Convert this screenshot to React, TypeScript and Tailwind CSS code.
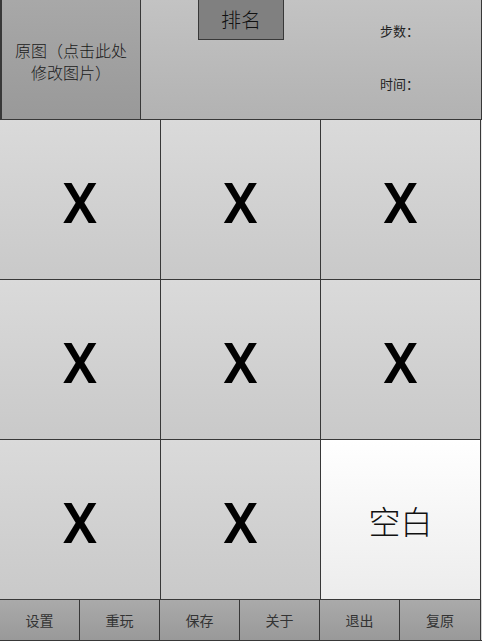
import React from "react";

const cjk = "font-['Noto_Sans_CJK_SC',sans-serif]";

const tiles = ["X", "X", "X", "X", "X", "X", "X", "X", ""];
const bottomButtons = ["设置", "重玩", "保存", "关于", "退出", "复原"];

const App: React.FC = () => {
  return (
    <div className={`w-[482px] h-[641px] flex flex-col bg-[#d6d6d6] ${cjk}`}>
      {/* top bar */}
      <div className="flex h-[120px] border-b border-[#383838]">
        <div className="w-[141px] flex items-center justify-center border-l-2 border-r border-[#383838] bg-gradient-to-b from-[#a8a8a8] to-[#999999]">
          <p className="text-[16px] leading-[22px] text-[#1a1a1a] text-center pt-[2px] font-light">
            原图（点击此处
            <br />
            修改图片）
          </p>
        </div>
        <div className="flex-1 flex border-r border-[#383838] bg-gradient-to-b from-[#c3c3c3] to-[#b2b2b2]">
          <button className="ml-[57px] w-[86px] h-[40px] border border-t-0 border-[#383838] bg-[#808080] text-[20px] leading-[36px] text-[#111] font-light">
            排名
          </button>
          <div className="ml-[96px] flex flex-col pt-[22px] gap-[35px] text-[13px] leading-[18px] text-[#222]">
            <span>步数：</span>
            <span>时间：</span>
          </div>
        </div>
      </div>

      {/* puzzle grid */}
      <div className="grid grid-cols-[161px_160px_160px_1px] grid-rows-[160px_160px_160px]">
        {tiles.map((t, i) => (
          <React.Fragment key={i}>
            <div
              className={`flex items-center justify-center border-r border-b border-[#383838] ${
                t
                  ? "bg-gradient-to-b from-[#dadada] to-[#c9c9c9]"
                  : "bg-gradient-to-b from-[#ffffff] to-[#ececec]"
              }`}
            >
              {t ? (
                <span className="font-['Roboto',Arial,sans-serif] font-medium text-[56px] leading-none text-black pt-[8px]">
                  {t}
                </span>
              ) : (
                <span className="text-[32px] leading-none text-[#111] font-light">空白</span>
              )}
            </div>
            {i % 3 === 2 && <div className="bg-[#e8e8e8]" />}
          </React.Fragment>
        ))}
      </div>

      {/* bottom bar */}
      <div className="flex flex-1 border-b border-[#383838]">
        {bottomButtons.map((b) => (
          <button
            key={b}
            className="w-[80px] last:w-[81px] border-r border-[#383838] bg-gradient-to-b from-[#aaaaaa] to-[#999999] text-[14px] text-[#333]"
          >
            {b}
          </button>
        ))}
      </div>
    </div>
  );
};

export default App;
